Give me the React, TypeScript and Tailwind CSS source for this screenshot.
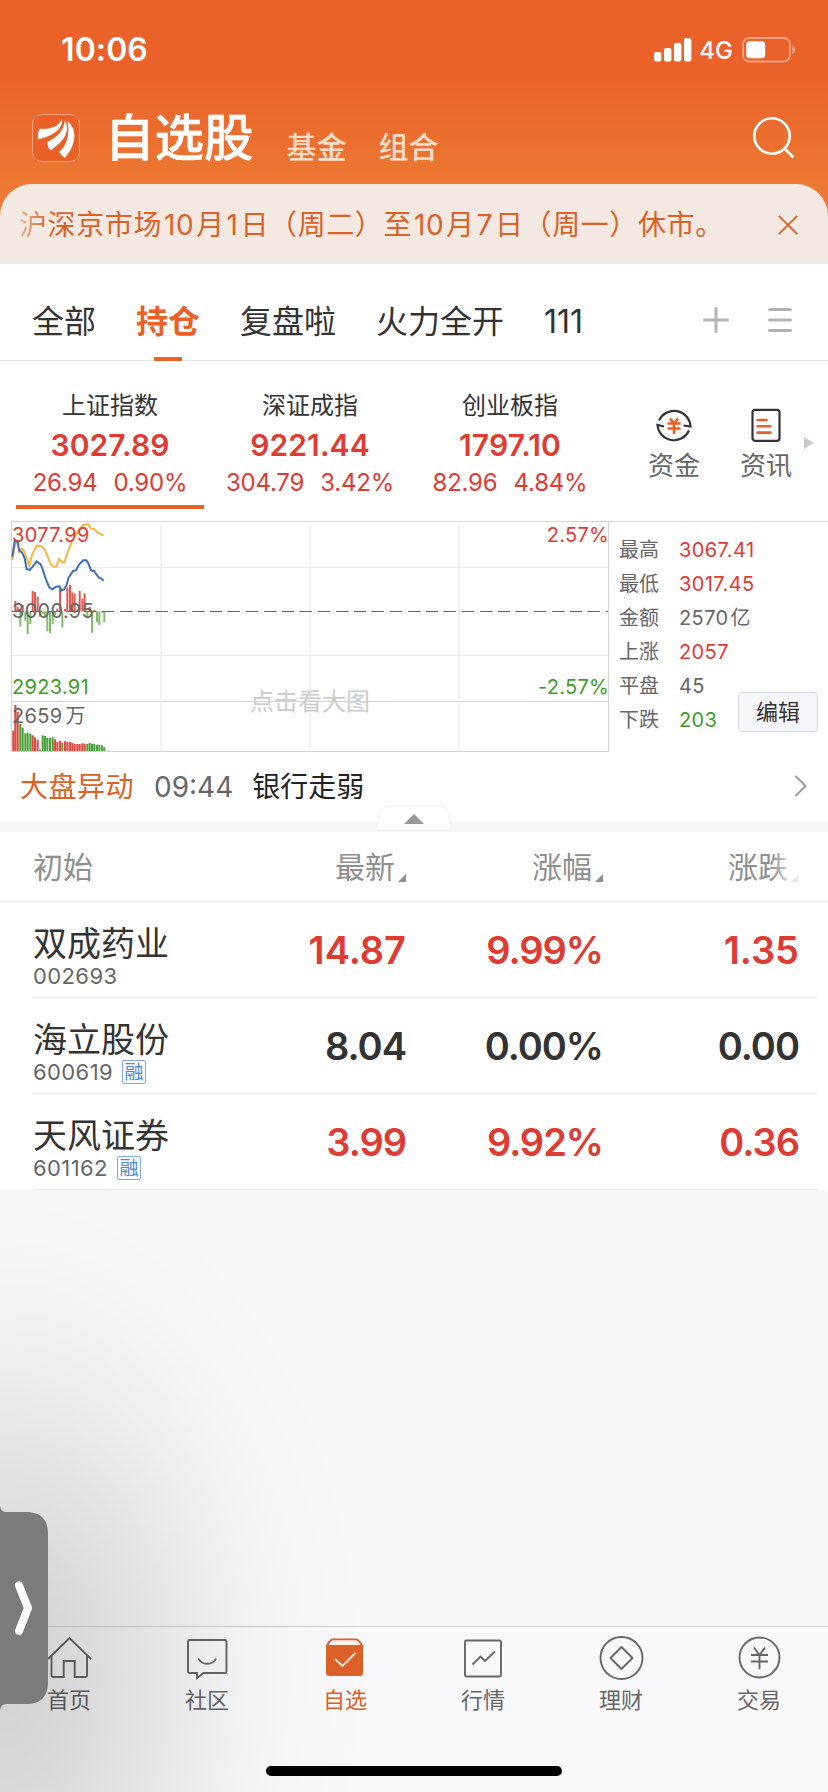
import type { ReactNode } from "react";

const RED = "#de3b33";
const GREEN = "#3f9c2b";

const tabs = [
  { label: "全部" },
  { label: "持仓", active: true },
  { label: "复盘啦" },
  { label: "火力全开" },
  { label: "111" },
];

const indices = [
  { name: "上证指数", value: "3027.89", diff: "26.94", pct: "0.90%", active: true },
  { name: "深证成指", value: "9221.44", diff: "304.79", pct: "3.42%" },
  { name: "创业板指", value: "1797.10", diff: "82.96", pct: "4.84%" },
];

const stats = [
  { label: "最高", value: "3067.41", color: "text-[#de3b33]" },
  { label: "最低", value: "3017.45", color: "text-[#de3b33]" },
  { label: "金额", value: "2570", unit: "亿", color: "text-[#666]" },
  { label: "上涨", value: "2057", color: "text-[#de3b33]" },
  { label: "平盘", value: "45", color: "text-[#666]" },
  { label: "下跌", value: "203", color: "text-[#3f9c2b]" },
];

const stocks = [
  { name: "双成药业", code: "002693", price: "14.87", pct: "9.99%", diff: "1.35", up: true },
  { name: "海立股份", code: "600619", margin: true, price: "8.04", pct: "0.00%", diff: "0.00" },
  { name: "天风证券", code: "601162", margin: true, price: "3.99", pct: "9.92%", diff: "0.36", up: true },
];

// [x, y] of each bar end; bars above the zero line are red, below are green
const flow = [
  [46, 273], [53, 290], [61, 350], [68, 285], [76, 332], [83, 372], [91, 342],
  [98, 243], [105, 246], [113, 261], [120, 320], [128, 312], [135, 320], [142, 364],
  [150, 370], [158, 342], [165, 315], [172, 296], [180, 232], [187, 353], [195, 297],
  [202, 232], [210, 225], [217, 247], [224, 252], [239, 243], [247, 266], [254, 250],
  [262, 320], [269, 290], [276, 368], [283, 300], [291, 336], [298, 345], [306, 308], [313, 336],
];

const volume: [number, number, "r" | "g"][] = [
  [40, 663, "r"], [46, 585, "r"], [53, 605, "r"], [61, 642, "g"], [68, 653, "g"],
  [76, 670, "g"], [83, 668, "g"], [91, 671, "g"], [98, 676, "r"], [105, 682, "r"],
  [113, 690, "r"], [120, 719, "g"], [128, 676, "g"], [135, 678, "g"], [142, 683, "g"],
  [150, 684, "g"], [158, 682, "g"], [165, 688, "r"], [172, 696, "r"], [180, 692, "r"],
  [187, 698, "g"], [195, 694, "r"], [202, 696, "r"], [210, 696, "r"], [217, 699, "r"],
  [224, 702, "r"], [232, 702, "r"], [239, 702, "r"], [247, 700, "r"], [254, 701, "r"],
  [262, 702, "g"], [269, 699, "g"], [276, 701, "g"], [283, 702, "g"], [291, 704, "g"],
  [298, 705, "g"], [306, 706, "g"], [313, 712, "g"],
];

function StatusBar() {
  return (
    <div className="flex h-[100px] items-center justify-between pl-[61px] pr-8 text-white">
      <span className="text-[32px] leading-none font-semibold tracking-[0.1px]">10:06</span>
      <div className="flex items-center">
        <svg width="38" height="24" viewBox="0 0 38 24" fill="currentColor">
          <rect x="0" y="14" width="7.4" height="9.5" rx="2" />
          <rect x="10" y="10" width="7.4" height="13.5" rx="2" />
          <rect x="20" y="5" width="7.4" height="18.5" rx="2" />
          <rect x="30" y="0" width="7.4" height="23.5" rx="2" />
        </svg>
        <span className="ml-[7px] mt-[2px] text-[24px] leading-none font-medium">4G</span>
        <svg className="ml-[9px]" width="54" height="26" viewBox="0 0 54 26">
          <rect x="1" y="1" width="47" height="23.5" rx="6.5" fill="none" stroke="#fff" strokeOpacity=".42" strokeWidth="1.8" />
          <rect x="4.2" y="4.2" width="19" height="17" rx="3.5" fill="#fff" />
          <path d="M50.5 8.5c3.4 1.6 3.4 7 0 8.6z" fill="#fff" fillOpacity=".5" />
        </svg>
      </div>
    </div>
  );
}

function Header() {
  return (
    <div className="flex h-[84px] items-start pl-8 pr-[33px] pt-[14px]">
      <svg width="48" height="48" viewBox="0 0 48 48">
        <rect x=".5" y=".5" width="47" height="47" rx="9.5" fill="#ea6128" stroke="#fff" strokeOpacity=".4" />
        <g fill="#fff">
          <path d="M6 25.5C5.6 21 6.3 17 7.5 14.8C17 15.500 26 13.500 30 5C31 13.500 24 21 6 25.5Z" />
          <path d="M18.6 36.5C16 34 15.2 30 15.5 27.7C24 24 32 17.500 33 6C37.500 16 35 25 18.6 36.5Z" />
          <path d="M33 43.8C31 43 28 40.500 27.3 37.800C34 32 38.500 22 35.5 7C46 16 44 31 33 43.8Z" />
        </g>
      </svg>
      <h1 className="ml-[25px] text-[49.5px] leading-[48px] font-medium text-white [-webkit-text-stroke:0.5px_white]">
        自选股
      </h1>
      <span className="ml-[33px] mt-[18px] text-[30px] leading-[30px] font-medium text-[#fcdcc8]">基金</span>
      <span className="ml-8 mt-[18px] text-[30px] leading-[30px] font-medium text-[#fcdcc8]">组合</span>
      <svg className="ml-auto mt-[2px]" width="43" height="43" viewBox="0 0 43 43" fill="none" stroke="#fff" strokeWidth="2.6">
        <circle cx="20" cy="20" r="17.7" />
        <path d="M32.500 32.500 41.500 41.500" />
      </svg>
    </div>
  );
}

function Num({ children }: { children: ReactNode }) {
  return <span className="mx-[1.9px]">{children}</span>;
}

function Notice() {
  return (
    <div className="flex h-20 items-center rounded-t-[32px] bg-[#f3e8e2] pl-[19px] pr-[30px] pt-px">
      <p className="flex-1 text-[28px] leading-none tracking-[0.6px] whitespace-nowrap text-[#d96226]">
        <span className="bg-linear-to-r from-[#e9b595] to-[#d96226] bg-clip-text text-transparent">沪</span>
        深京市场<Num>10</Num>月<Num>1</Num>日（周二）至<Num>10</Num>月<Num>7</Num>日（周一）休市。
      </p>
      <svg width="20" height="20" viewBox="0 0 20 20" stroke="#d96226" strokeWidth="1.7">
        <path d="M.8.8 19.2 19.2M19.2.8.8 19.2" />
      </svg>
    </div>
  );
}

function GroupTabs() {
  return (
    <div className="flex h-[97px] items-stretch border-b border-[#e2e2e2] bg-white pl-8 pr-9">
      <div className="flex gap-10">
        {tabs.map((t) => (
          <div key={t.label} className="relative flex items-center pt-[19px]">
            <span
              className={`text-[32px] leading-none whitespace-nowrap ${
                t.active ? "font-bold text-[#ea6128]" : "text-[#333]"
              }`}
            >
              {t.label}
            </span>
            {t.active && (
              <span className="absolute -bottom-px left-1/2 h-1 w-7 -translate-x-1/2 rounded-[1px] bg-[#ea6128]" />
            )}
          </div>
        ))}
      </div>
      <svg className="ml-auto mt-[43px]" width="26" height="26" viewBox="0 0 26 26" stroke="#b3b3b3" strokeWidth="3" strokeLinecap="round">
        <path d="M13 1.500V24.500M1.500 13H24.500" />
      </svg>
      <svg className="ml-[39px] mt-[43px]" width="24" height="26" viewBox="0 0 24 26" stroke="#b3b3b3" strokeWidth="3" strokeLinecap="round">
        <path d="M1.500 2.500H22.500M1.500 13H22.500M1.500 23.500H22.500" />
      </svg>
    </div>
  );
}

function IndexStrip() {
  return (
    <div className="flex h-[160px] bg-white pl-4">
      {indices.map((i) => (
        <div key={i.name} className="mr-3 flex w-[188px] flex-col items-center pt-[33px]">
          <span className="text-[24px] leading-[24px] text-[#333]">{i.name}</span>
          <span className="mt-[12px] text-[30px] leading-[30px] font-semibold tracking-[0.1px] text-[#de3b33]">{i.value}</span>
          <span className="mt-[11px] flex gap-4 text-[24px] leading-[24px] tracking-[-0.2px] text-[#de3b33]">
            <span>{i.diff}</span>
            <span>{i.pct}</span>
          </span>
          {i.active && <span className="mt-[10px] h-1 w-full bg-[#ea6128]" />}
        </div>
      ))}
      <div className="ml-[12px] flex w-[92px] flex-col items-center pt-[45px]">
        <svg width="38" height="38" viewBox="0 0 38 38" fill="none" stroke="#333" strokeWidth="2.2">
          <path d="M4 14.500A16.500 16.500 0 0 1 35.500 20.500L28.500 19.500" />
          <path d="M34 24.500A16.500 16.500 0 0 1 2.500 19L9 20.500" />
          <path d="M15 12.500 19 17.500 23 12.500M12.500 17.500H25.500M12.500 22.500H25.500M19 17V28" stroke="#ea6128" strokeWidth="2.6" />
        </svg>
        <span className="mt-[9px] text-[26px] leading-[26px] text-[#666]">资金</span>
      </div>
      <div className="flex w-[92px] flex-col items-center pt-[45px]">
        <svg width="38" height="38" viewBox="0 0 38 38" fill="none" stroke="#333" strokeWidth="2.2">
          <rect x="5.500" y="3.800" width="27" height="31" rx="2.5" />
          <path d="M10.500 14H19.500M10.500 20.300H23.500M10.500 26.600H23.500" stroke="#ea6128" strokeWidth="2.6" strokeLinecap="round" />
        </svg>
        <span className="mt-[9px] text-[26px] leading-[26px] text-[#666]">资讯</span>
      </div>
      <svg className="-ml-2 mt-[76px]" width="10" height="12" viewBox="0 0 10 12">
        <path d="M0 0 9.500 6 0 12Z" fill="#c8c8c8" />
      </svg>
    </div>
  );
}

function MinuteChart() {
  return (
    <div className="relative h-[231px] w-[598px] text-[20px] leading-none tracking-[0.3px]">
      {/* three units per pixel */}
      <svg className="block" width="598" height="231" viewBox="33 33 1794 693" fill="none">
        <path d="M483 42V567M483 579V723M930 42V567M930 579V723M1377 42V567M1377 579V723" stroke="#f0f0f6" strokeWidth="5" />
        <path d="M36 172.500H1824M36 436.500H1824" stroke="#ebebee" strokeWidth="3" />
        <path d="M33 34.500H1827M33 574.500H1827M33 724.500H1827M34.500 33V726M1825.500 33V726" stroke="#d3d3da" strokeWidth="3" />
        {flow.map(([x, y]) => (
          <path key={x} d={`M${x} 304V${y}`} stroke={y < 304 ? RED : "#6ab04c"} strokeOpacity=".85" strokeWidth="6" />
        ))}
        {volume.map(([x, y, c]) => (
          <path key={x} d={`M${x} 723V${y}`} stroke={c === "r" ? RED : GREEN} strokeOpacity=".92" strokeWidth="6.4" />
        ))}
        <path d="M36 304.500H1824" stroke="#666" strokeWidth="3" strokeDasharray="36 18" />
        <polyline
          points="37,150 47,95 52,95 58,125 66,115 72,123 88,166 97,132 110,107 125,109 133,118 140,132 152,162 160,170 170,170 177,147 186,157 193,156 205,122 220,85 235,60 250,45 265,42 273,56 282,57 295,69 302,71 310,77"
          stroke="#f3b746"
          strokeWidth="6"
        />
        <polyline
          points="37,140 44,94 52,94 58,122 66,127 74,145 80,177 89,180 96,172 110,154 122,163 128,178 136,204 148,233 157,238 168,230 179,229 184,242 193,238 200,224 206,202 220,182 228,181 237,164 250,151 259,151 265,160 273,181 282,183 296,202 303,205 311,212"
          stroke="#3f6fba"
          strokeWidth="6"
        />
      </svg>
      <span className="absolute left-[1px] top-[4px] text-[#de3b33]">3077.99</span>
      <span className="absolute right-0 top-[4px] text-[#de3b33]">2.57%</span>
      <span className="absolute left-[1px] top-[80px] text-[#666]">3000.95</span>
      <span className="absolute left-[1px] top-[156px] text-[#3f9c2b]">2923.91</span>
      <span className="absolute right-0 top-[156px] text-[#3f9c2b]">-2.57%</span>
      <span className="absolute left-[1px] top-[185px] text-[#666]">
        2659<span className="ml-[3px]">万</span>
      </span>
      <span className="absolute left-[239px] top-[169px] text-[24px] tracking-normal text-[#ccc]">点击看大图</span>
    </div>
  );
}

function MarketPanel() {
  return (
    <div className="flex h-[231px] bg-white pl-[11px]">
      <MinuteChart />
      <div className="flex flex-1 border-t border-[#d3d3da] pl-[10px] pr-[10px]">
        <dl className="w-[142px] pt-[11px] text-[20px] leading-[34px]">
          {stats.map((s) => (
            <div key={s.label} className="flex whitespace-nowrap">
              <dt className="w-[60px] text-[#666]">{s.label}</dt>
              <dd className={`tracking-[0.4px] ${s.color}`}>
                {s.value}
                {s.unit && <span className="ml-[2px]">{s.unit}</span>}
              </dd>
            </div>
          ))}
        </dl>
        <button className="-ml-[23px] mt-[170px] h-10 w-20 shrink-0 rounded-[4px] border border-[#d5d7dc] bg-[#f6f7fa] text-[22px] leading-none text-[#333]">
          编辑
        </button>
      </div>
    </div>
  );
}

function MarketAlert() {
  return (
    <div className="relative flex h-[80px] items-start border-b-10 border-[#f6f7f9] bg-white pl-5 pr-[21px] pt-[21px] text-[28px] leading-[28px] whitespace-nowrap">
      <span className="tracking-[0.5px] text-[#d96226]">大盘异动</span>
      <span className="ml-[20px] text-[#666]">09:44</span>
      <span className="ml-[19px] text-[#222]">银行走弱</span>
      <svg className="ml-auto mt-[2px]" width="13" height="22" viewBox="0 0 13 22" fill="none" stroke="#999" strokeWidth="2">
        <path d="M1.500 1 11.500 11 1.500 21" />
      </svg>
      <svg className="absolute left-[375px] top-[53px]" width="78" height="27" viewBox="0 0 78 27">
        <path d="M1 25.500 3.500 11Q5.500 1 16 1H62Q72.500 1 74.500 11L77 25.500Z" fill="#fff" stroke="#eeeff1" />
        <path d="M29 19 39 9 49 19Z" fill="#999" />
      </svg>
    </div>
  );
}

function Corner() {
  return (
    <svg className="ml-[3px]" width="8" height="8" viewBox="0 0 8 8">
      <path d="M8 0V8H0Z" fill="currentColor" />
    </svg>
  );
}

function Columns({ children, className }: { children: ReactNode; className: string }) {
  return <div className={`grid grid-cols-[212px_161px_197px_196px] ${className}`}>{children}</div>;
}

function StockTable() {
  return (
    <div className="bg-white">
      <div className="relative border-b border-[#ebebeb] pl-[33px] text-[30px] leading-[30px] text-[#8f8f8f]">
        <Columns className="h-[69px] items-center">
          <span>初始</span>
          {["最新", "涨幅", "涨跌"].map((h) => (
            <span key={h} className="flex items-end justify-end">
              {h}
              <Corner />
            </span>
          ))}
        </Columns>
        <div className="absolute inset-y-0 right-0 w-[58px] bg-linear-to-r from-white/0 via-white/90 via-50% to-white" />
      </div>
      {stocks.map((s) => (
        <div key={s.code} className="ml-[33px] mr-[10px] border-b border-[#ebebeb]">
          <Columns className="h-[95px]">
            <div className="pt-[25px]">
              <div className="text-[34px] leading-[34px] text-[#333]">{s.name}</div>
              <div className="mt-[3px] flex h-6 items-center text-[22px] leading-none tracking-[0.4px] text-[#666]">
                {s.code}
                {s.margin && (
                  <span className="ml-[9px] flex size-6 items-center justify-center rounded-[2px] border border-[#7fa9e6] text-[19px] leading-none tracking-normal text-[#4a86dc]">
                    融
                  </span>
                )}
              </div>
            </div>
            {[s.price, s.pct, s.diff].map((v, i) => (
              <div
                key={i}
                className={`pt-[29px] text-right text-[38px] leading-[38px] font-semibold ${
                  v.includes("1") ? "" : "tracking-[-1px]"
                } ${s.up ? "text-[#de3b33]" : "text-[#333]"}`}
              >
                {v}
              </div>
            ))}
          </Columns>
        </div>
      ))}
    </div>
  );
}

const navItems = [
  {
    label: "首页",
    icon: (
      <>
        <path d="M1 23 22.500 2 44 23" />
        <path d="M4.500 20V39.500Q4.500 41 6 41H16.700V25H27.700V41H38.500Q40 41 40 39.500V20" />
      </>
    ),
  },
  {
    label: "社区",
    icon: (
      <>
        <path d="M4.500 4H40Q41.500 4 41.500 5.500V35.500Q41.500 37 40 37H18.500L12 42V37H4.500Q3 37 3 35.500V5.500Q3 4 4.500 4Z" />
        <path d="M13.500 22.500C16.500 29.500 28 29.500 31 22.500" />
      </>
    ),
  },
  {
    label: "自选",
    active: true,
    icon: (
      <>
        <path d="M8.500 2.500H34.500Q38 5 40 9.500V37Q40 40 37 40H6Q3 40 3 37V9.500Q5 5 8.500 2.500Z" fill="#dc6128" stroke="none" />
        <path d="M9.500 4.200H33.500Q35.500 5.500 37.500 9H5.500Q7.500 5.500 9.500 4.200Z" fill="#f8f2ef" stroke="none" />
        <path d="M12 23 19.500 30 32.500 17" stroke="#fbe6dc" />
      </>
    ),
  },
  {
    label: "行情",
    icon: (
      <>
        <rect x="4" y="4.500" width="36" height="36" rx="1.5" />
        <path d="M11.500 28.500 19.500 20.500 24 25 34 15.500" />
      </>
    ),
  },
  {
    label: "理财",
    icon: (
      <>
        <circle cx="22.500" cy="22" r="21" />
        <path d="M22.500 11 33.500 22 22.500 33 11.500 22Z" strokeLinejoin="round" />
      </>
    ),
  },
  {
    label: "交易",
    icon: (
      <>
        <circle cx="22.500" cy="21.500" r="20" />
        <path d="M17 11.500 22.500 19 28 11.500M14 19H31M14 25.500H31M22.500 19V33" />
      </>
    ),
  },
];

function BottomNav() {
  return (
    <nav className="relative h-[166px] border-t border-[#cfd0d4] bg-[#f9f9fb]">
      <div className="grid grid-cols-6">
        {navItems.map((n) => (
          <div key={n.label} className={`flex flex-col items-center pt-[9px] ${n.active ? "text-[#dc6128]" : "text-[#666]"}`}>
            <svg width="45" height="44" viewBox="0 0 45 44" fill="none" stroke="currentColor" strokeWidth="1.9">
              {n.icon}
            </svg>
            <span className="mt-[9px] text-[22px] leading-[22px]">{n.label}</span>
          </div>
        ))}
      </div>
      <div className="absolute bottom-[16px] left-[266px] h-[10px] w-[296px] rounded-full bg-black" />
    </nav>
  );
}

function SideHandle() {
  return (
    <svg className="absolute left-0 top-[1506px]" width="48" height="204" viewBox="0 0 48 204" fill="none">
      <path d="M0 0Q1 6 6 6H26Q48 6 48 28V176Q48 198 26 198H6Q1 198 0 204Z" fill="#7b7b7c" />
      <path d="M19 79.500 28 102 19 125" stroke="#fff" strokeWidth="8" strokeLinecap="round" strokeLinejoin="round" />
    </svg>
  );
}

export default function App() {
  return (
    <div className="relative flex h-[1792px] w-[828px] flex-col overflow-hidden bg-[#f6f8fa] font-['Inter','Noto_Sans_CJK_SC',sans-serif]">
      <div className="bg-linear-to-b from-[#ea6129] from-[75px] to-[#ec7833] to-[184px]">
        <StatusBar />
        <Header />
        <Notice />
      </div>
      <GroupTabs />
      <IndexStrip />
      <MarketPanel />
      <MarketAlert />
      <StockTable />
      <div className="relative flex flex-1 flex-col justify-end">
        <BottomNav />
        {/* soft shadow spreading from the side handle */}
        <div className="pointer-events-none absolute inset-0 bg-[radial-gradient(ellipse_370px_530px_at_0px_490px,rgba(0,0,0,0.155),rgba(0,0,0,0.13)_20%,rgba(0,0,0,0.085)_40%,rgba(0,0,0,0.038)_60%,rgba(0,0,0,0.012)_80%,transparent)]" />
      </div>
      <SideHandle />
    </div>
  );
}
